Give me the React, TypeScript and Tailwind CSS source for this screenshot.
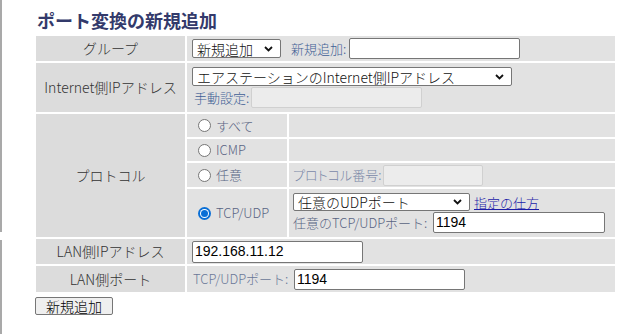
import React from 'react';

const jp = "font-['Noto_Sans_CJK_JP','Liberation_Sans',sans-serif]";

function Chevron() {
  return (
    <svg width="9" height="6" viewBox="0 0 9 6" className="shrink-0">
      <path d="M1 1l3.5 3.5L8 1" fill="none" stroke="#111" strokeWidth="1.8" />
    </svg>
  );
}

function Select({ label, className }: { label: string; className: string }) {
  return (
    <div
      className={`flex items-center justify-between bg-white border border-[#767676] rounded-[2px] pl-[4px] pr-[7px] text-[14px] leading-none text-[#111] whitespace-nowrap ${className}`}
    >
      <span>{label}</span>
      <Chevron />
    </div>
  );
}

function Input({ value, className }: { value?: string; className: string }) {
  return (
    <div
      className={`flex items-center bg-white border border-[#767676] rounded-[2px] pl-[2px] text-[14px] font-['Liberation_Sans',sans-serif] font-normal text-black ${className}`}
    >
      {value}
    </div>
  );
}

function Disabled({ className }: { className: string }) {
  return <div className={`bg-[#ececec] border border-[#d0d0d0] rounded-[2px] ${className}`} />;
}

function Radio({ checked, label }: { checked?: boolean; label: string }) {
  return (
    <div className="flex items-center gap-[5px] pl-[11px] text-[13px] text-[#596482] whitespace-nowrap">
      {checked ? (
        <span className="w-[13px] h-[13px] rounded-full bg-[#0a6fd6] flex items-center justify-center">
          <span className="w-[9px] h-[9px] rounded-full bg-white flex items-center justify-center">
            <span className="w-[7px] h-[7px] rounded-full bg-[#0a6fd6]" />
          </span>
        </span>
      ) : (
        <span className="w-[13px] h-[13px] rounded-full border border-[#767676] bg-white" />
      )}
      <span>{label}</span>
    </div>
  );
}

export default function App() {
  const labelCell = 'bg-[#dcdcdc] flex items-center justify-center text-[14px] text-[#333] whitespace-nowrap';
  const valueCell = 'bg-[#e2e2e2]';

  return (
    <div className={`min-h-screen bg-white flex font-light ${jp}`}>
      {/* left frame line */}
      <div className="w-[2px] flex flex-col">
        <div className="h-[232px] bg-[#a9a9a9]" />
        <div className="h-[8px]" />
        <div className="flex-1 bg-[#a9a9a9]" />
      </div>

      <div className="pl-[34px] pt-[9px]">
        <h2 className="text-[18px] font-bold leading-[22px] text-[#333a6b] pl-[1px] mb-[5px]">
          ポート変換の新規追加
        </h2>

        <div className="grid grid-cols-[149px_428px] gap-[2px]">
          {/* グループ */}
          <div className={`${labelCell} h-[25px]`}>グループ</div>
          <div className={`${valueCell} flex items-center pl-[5px]`}>
            <Select label="新規追加" className="w-[89px] h-[19px]" />
            <span className="ml-[10px] mr-[3px] text-[13px] text-[#3f5f95] whitespace-nowrap">新規追加:</span>
            <Input className="w-[171px] h-[21px]" />
          </div>

          {/* Internet側IPアドレス */}
          <div className={`${labelCell} h-[49px]`}>Internet側IPアドレス</div>
          <div className={`${valueCell} flex flex-col pl-[5px] pt-[4px]`}>
            <Select label="エアステーションのInternet側IPアドレス" className="w-[320px] h-[19px] text-[13px]" />
            <div className="flex items-center mt-[1px]">
              <span className="pl-[2px] w-[59px] text-[13px] text-[#3f5f95] whitespace-nowrap">手動設定:</span>
              <Disabled className="w-[171px] h-[21px]" />
            </div>
          </div>

          {/* プロトコル */}
          <div className={`${labelCell}`}>プロトコル</div>
          <div className="grid grid-cols-[100px_326px] grid-rows-[23px_22px_24px_48px] gap-[2px]">
            <div className={`${valueCell} flex items-center`}>
              <Radio label="すべて" />
            </div>
            <div className={valueCell} />
            <div className={`${valueCell} flex items-center`}>
              <Radio label="ICMP" />
            </div>
            <div className={valueCell} />
            <div className={`${valueCell} flex items-center`}>
              <Radio label="任意" />
            </div>
            <div className={`${valueCell} flex items-center pl-[4px]`}>
              <span className="w-[90px] text-[13px] text-[#7a88a8] whitespace-nowrap [font-feature-settings:'palt']">
                プロトコル番号:
              </span>
              <Disabled className="w-[100px] h-[21px]" />
            </div>
            <div className={`${valueCell} flex items-center`}>
              <Radio checked label="TCP/UDP" />
            </div>
            <div className={`${valueCell} flex flex-col pl-[4px] pt-[4px]`}>
              <div className="flex items-center">
                <Select label="任意のUDPポート" className="w-[177px] h-[18px]" />
                <a href="#" className="ml-[4px] text-[13px] text-[#1c1ca8] underline leading-none whitespace-nowrap">
                  指定の仕方
                </a>
              </div>
              <div className="flex items-center mt-[1px]">
                <span className="w-[140px] text-[13px] text-[#596482] whitespace-nowrap">任意のTCP/UDPポート:</span>
                <Input value="1194" className="w-[172px] h-[21px]" />
              </div>
            </div>
          </div>

          {/* LAN側IPアドレス */}
          <div className={`${labelCell} h-[25px]`}>LAN側IPアドレス</div>
          <div className={`${valueCell} flex items-center pl-[5px]`}>
            <Input value="192.168.11.12" className="w-[171px] h-[22px]" />
          </div>

          {/* LAN側ポート */}
          <div className={`${labelCell} h-[26px]`}>LAN側ポート</div>
          <div className={`${valueCell} flex items-center pl-[5px]`}>
            <span className="w-[102px] pl-[1px] text-[13px] text-[#6a7898] whitespace-nowrap">TCP/UDPポート:</span>
            <Input value="1194" className="w-[171px] h-[21px]" />
          </div>
        </div>

        <button className="mt-[5px] -ml-[1px] w-[78px] h-[18px] flex items-center justify-center bg-[#efefef] border border-[#767676] rounded-[2px] text-[14px] text-black leading-none">
          新規追加
        </button>
      </div>
    </div>
  );
}
